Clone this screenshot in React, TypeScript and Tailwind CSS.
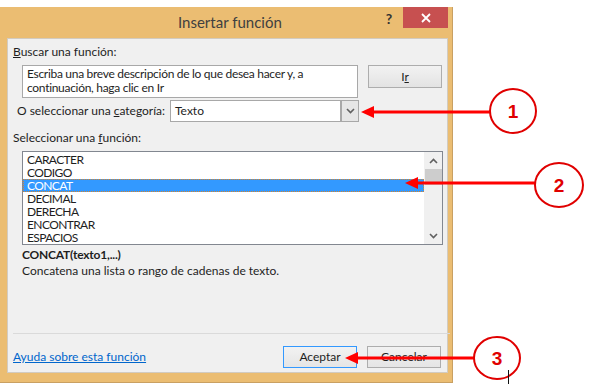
import React from "react";

const items = ["CARACTER", "CODIGO", "CONCAT", "DECIMAL", "DERECHA", "ENCONTRAR", "ESPACIOS"];

function Chevron({ up = false, className = "" }: { up?: boolean; className?: string }) {
  return (
    <svg width="9" height="6" viewBox="0 0 9 6" className={className}>
      <path
        d={up ? "M1 5 L4.5 1.5 L8 5" : "M1 1 L4.5 4.5 L8 1"}
        fill="none"
        stroke="#606060"
        strokeWidth="1.6"
      />
    </svg>
  );
}

export default function App() {
  return (
    <div
      className="relative w-[594px] h-[390px] bg-white overflow-hidden text-[12px] text-[#1e1e1e]"
      style={{ fontFamily: 'Lato, "Noto Sans", sans-serif' }}
    >
      <div className="pt-[7px]">
        <div className="w-[453px] h-[376px] bg-[#ebbd72] flex flex-col pl-[7px] pr-[4px] pb-[9px] border-r border-b border-[#c9a062]">
          {/* title bar */}
          <div className="h-[31px] flex items-start relative">
            <div className="flex-1 h-[31px] flex items-center justify-start pl-[171px]">
              <span className="text-[15px] text-[#404040] whitespace-nowrap">Insertar función</span>
            </div>
            <div className="w-[26px] h-[22px] flex items-center justify-center text-[14px] font-bold text-[#333] mr-[1px]">?</div>
            <div className="w-[45px] h-[21px] bg-[#c75050] flex items-center justify-center">
              <svg width="10" height="10" viewBox="0 0 10 10">
                <path d="M1 1 L9 9 M9 1 L1 9" stroke="white" strokeWidth="1.8" />
              </svg>
            </div>
          </div>
          {/* panel */}
          <div className="flex-1 bg-[#f0f0f0] border border-[#d2cbc0] flex flex-col pl-[5px]">
            <div className="h-[16px] mt-[5px] leading-[16px]">
              <span className="underline">B</span>uscar una función:
            </div>
            <div className="flex mt-[5px] ml-[9px]">
              <div className="w-[336px] h-[33px] bg-white border border-[#a8a8a8] px-[4px] pt-[1px] leading-[14px] tracking-[-0.3px]">
                Escriba una breve descripción de lo que desea hacer y, a<br />continuación, haga clic en Ir
              </div>
              <div className="ml-[10px] w-[74px] h-[23px] border border-[#adadad] bg-gradient-to-b from-[#f2f2f2] to-[#e3e3e3] flex items-center justify-center">
                <span>
                  I<span className="underline">r</span>
                </span>
              </div>
            </div>
            <div className="flex items-center mt-[2px] h-[22px]">
              <span className="ml-[4px] w-[153px] whitespace-nowrap">
                O seleccionar una <span className="underline">c</span>ategoría:
              </span>
              <div className="w-[189px] h-[22px] bg-white border border-[#a8a8a8] flex items-center">
                <span className="flex-1 pl-[4px]">Texto</span>
                <div className="w-[18px] h-[20px] bg-[#e6e6e6] border-l-2 border-[#a8a8a8] flex items-center justify-center">
                  <Chevron />
                </div>
              </div>
            </div>
            <div className="h-[16px] mt-[8px] leading-[16px]">
              Seleccionar una <span className="underline">f</span>unción:
            </div>
            <div className="mt-[5px] ml-[9px] w-[421px] h-[94px] bg-white border border-[#828790] flex">
              <div className="flex-1 flex flex-col pt-[1px] tracking-[-0.6px]">
                {items.map((it) => (
                  <div
                    key={it}
                    className={
                      it === "CONCAT"
                        ? "h-[13px] leading-[12px] pl-[3px] bg-[#3399ff] text-white border border-dotted border-[#d7842a]"
                        : "h-[13px] leading-[13px] pl-[4px]"
                    }
                  >
                    {it}
                  </div>
                ))}
              </div>
              <div className="w-[18px] bg-[#f0f0f0] flex flex-col items-center">
                <div className="h-[17px] flex items-center justify-center">
                  <Chevron up />
                </div>
                <div className="w-[17px] h-[16px] bg-[#cdcdcd]" />
                <div className="flex-1" />
                <div className="h-[17px] flex items-center justify-center">
                  <Chevron />
                </div>
              </div>
            </div>
            <div className="mt-[2px] ml-[9px] h-[16px] leading-[16px] font-bold tracking-[-0.2px]">CONCAT(texto1,...)</div>
            <div className="ml-[9px] h-[16px] leading-[16px]">Concatena una lista o rango de cadenas de texto.</div>
            <div className="mt-[54px] w-[437px] h-px bg-[#dadada]" />
            <div className="flex items-center mt-[12px]">
              <span className="flex-1 text-[#0066cc] underline">Ayuda sobre esta función</span>
              <div className="w-[74px] h-[22px] border border-[#3399ff] bg-gradient-to-b from-[#f2f2f2] to-[#e5e5e5] flex items-center justify-center">
                Aceptar
              </div>
              <div className="ml-[10px] mr-[6px] w-[74px] h-[22px] border border-[#adadad] bg-gradient-to-b from-[#f2f2f2] to-[#e5e5e5] flex items-center justify-center">
                Cancelar
              </div>
            </div>
          </div>
        </div>
      </div>

      {/* annotations */}
      <svg className="absolute inset-0 pointer-events-none" width="594" height="390" viewBox="0 0 594 390">
        <line x1="370" y1="112" x2="490" y2="112" stroke="#ff0000" strokeWidth="3" />
        <polygon points="361,112 374,106 374,118" fill="#ff0000" />
        <ellipse cx="513" cy="111" rx="23" ry="22" fill="white" stroke="#e00000" strokeWidth="2" />
        <text x="513" y="118" textAnchor="middle" fill="#e00000" fontSize="19" fontWeight="bold" fontFamily="Liberation Sans, Arial, sans-serif">1</text>

        <line x1="414" y1="183" x2="536" y2="183" stroke="#ff0000" strokeWidth="3" />
        <polygon points="405,183 418,177 418,189" fill="#ff0000" />
        <ellipse cx="559" cy="185" rx="24" ry="22" fill="white" stroke="#e00000" strokeWidth="2" />
        <text x="559" y="192" textAnchor="middle" fill="#e00000" fontSize="19" fontWeight="bold" fontFamily="Liberation Sans, Arial, sans-serif">2</text>

        <line x1="354" y1="358" x2="474" y2="358" stroke="#ff0000" strokeWidth="3" />
        <polygon points="345,358 358,352 358,364" fill="#ff0000" />
        <ellipse cx="497" cy="358" rx="23" ry="21" fill="white" stroke="#e00000" strokeWidth="2" />
        <text x="497" y="365" textAnchor="middle" fill="#e00000" fontSize="19" fontWeight="bold" fontFamily="Liberation Sans, Arial, sans-serif">3</text>

        <line x1="508.5" y1="370" x2="508.5" y2="384" stroke="#111" strokeWidth="1" />
      </svg>
    </div>
  );
}
